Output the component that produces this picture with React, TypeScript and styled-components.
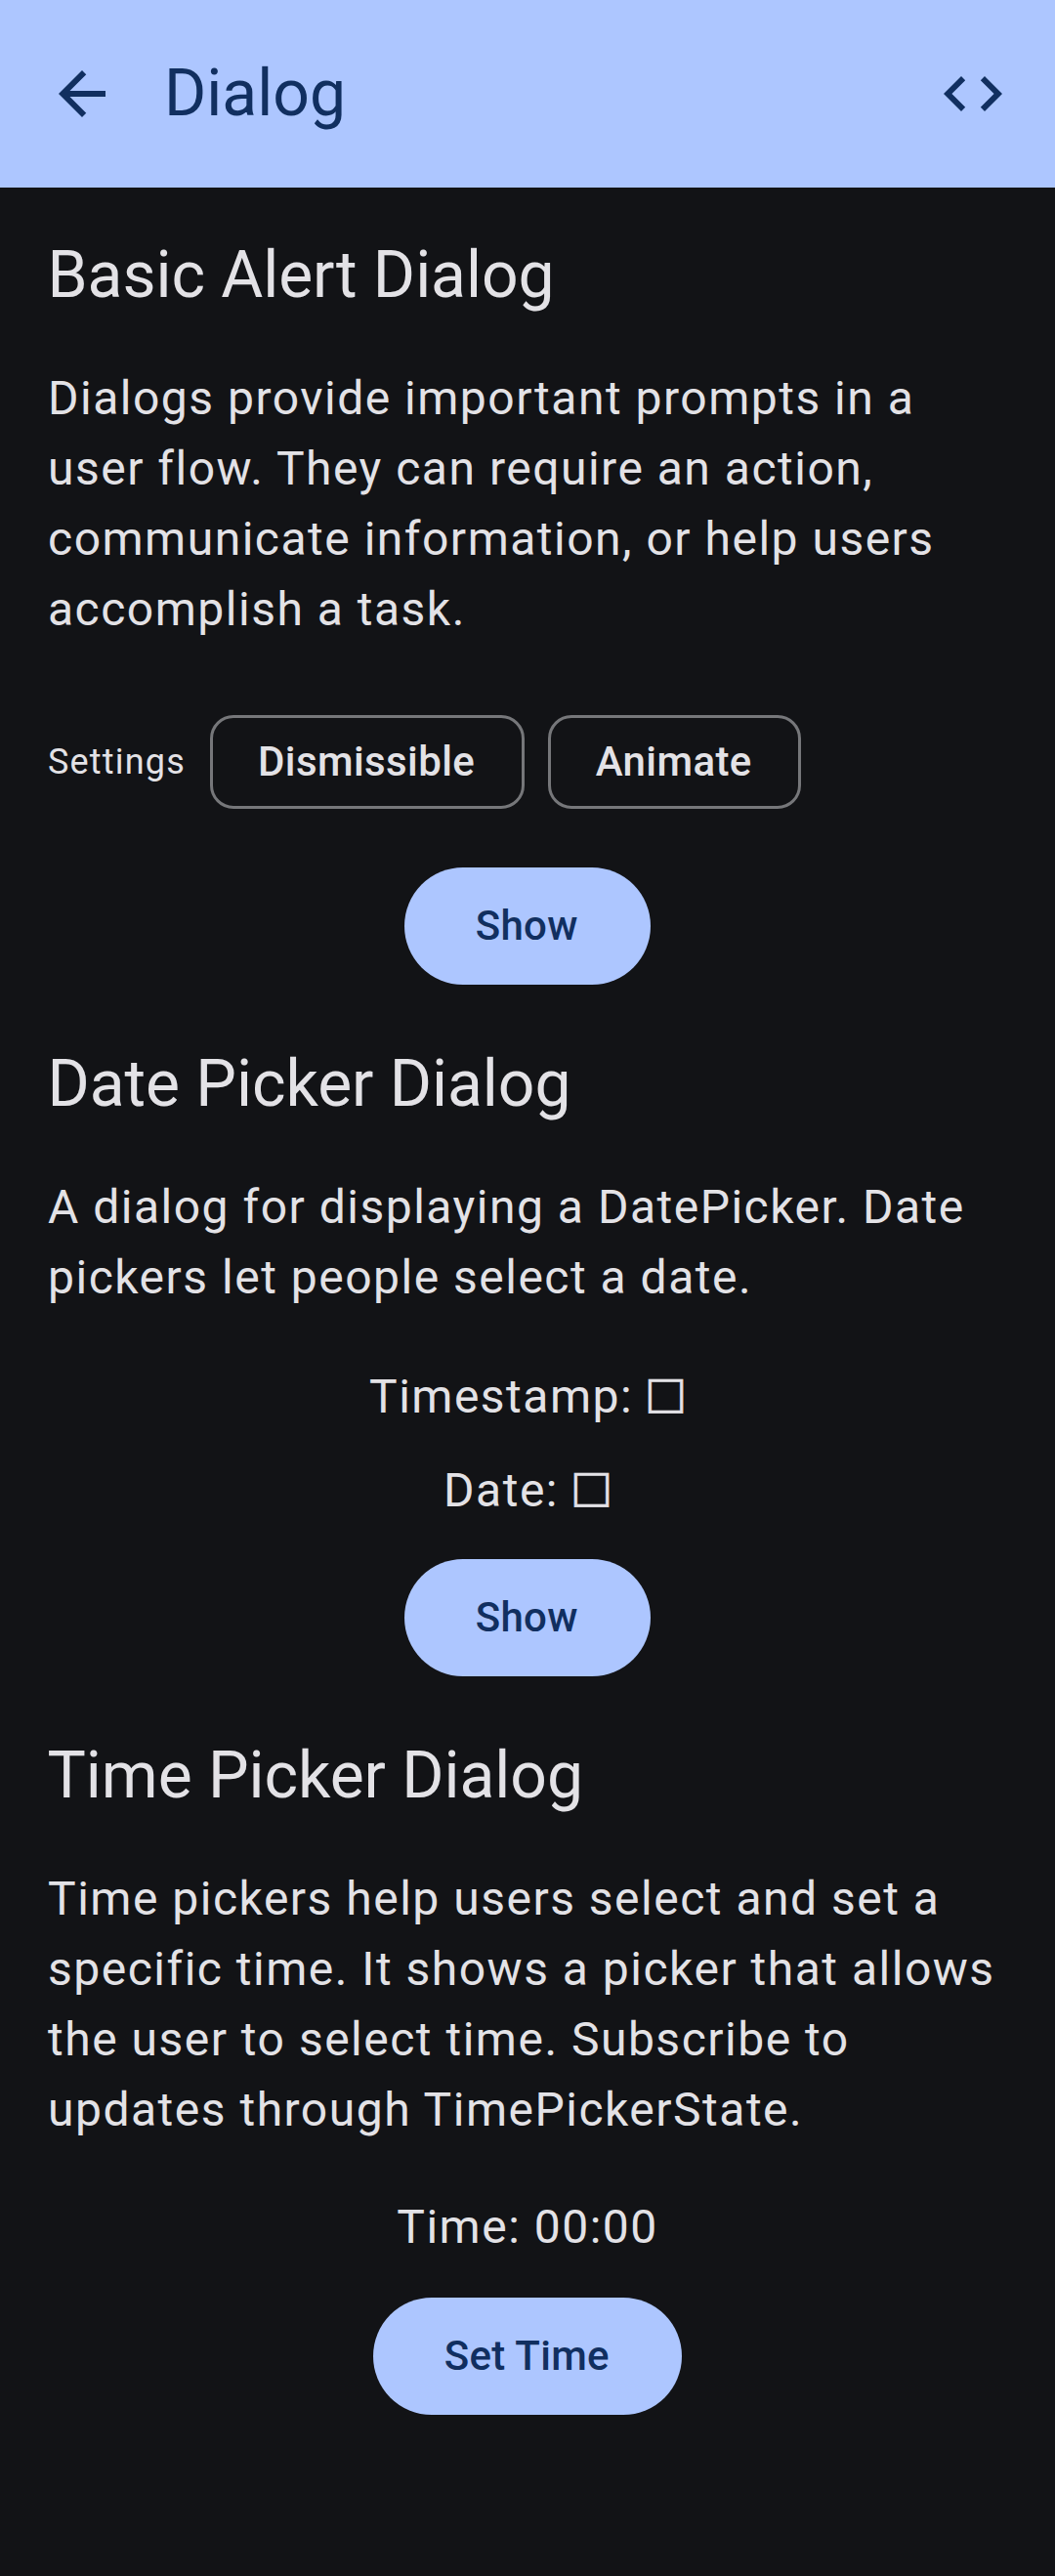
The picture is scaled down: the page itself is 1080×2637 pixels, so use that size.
import React from "react";
import styled, { createGlobalStyle } from "styled-components";

const color = {
  primary: "#adc6ff",
  onPrimary: "#112f60",
  surface: "#121316",
  onSurface: "#e3e2e6",
  outline: "#76777a",
};

const GlobalStyle = createGlobalStyle`
  body {
    margin: 0;
    background: ${color.surface};
  }
  * {
    box-sizing: border-box;
  }
`;

const Screen = styled.div`
  min-height: 2637px;
  background: ${color.surface};
  color: ${color.onSurface};
  font-family: Roboto, "Liberation Sans", sans-serif;
`;

const AppBar = styled.header`
  display: flex;
  align-items: center;
  height: 192px;
  padding: 0 48px;
  background: ${color.primary};
  color: ${color.onPrimary};
`;

const Icon = styled.svg`
  display: block;
  width: 72px;
  height: 72px;
  fill: currentColor;
`;

const IconButton = styled.button`
  padding: 0;
  border: 0;
  background: none;
  color: inherit;
`;

const BarTitle = styled.h1`
  flex: 1;
  margin: 0 0 0 48px;
  font-size: 66px;
  font-weight: 400;
  line-height: 84px;
`;

const Content = styled.main`
  display: flex;
  flex-direction: column;
  gap: 60px;
  padding: 48px;
`;

const Section = styled.section`
  display: flex;
  flex-direction: column;
`;

const SectionTitle = styled.h2`
  margin: 0 0 48px;
  padding-left: 0.5px;
  font-size: 66px;
  font-weight: 400;
  line-height: 84px;
  letter-spacing: -0.06px;
`;

const Description = styled.p`
  margin: 0 0 48px;
  padding-left: 1px;
  font-size: 48px;
  line-height: 72px;
  letter-spacing: 1.5px;
`;

const Settings = styled.div`
  display: flex;
  align-items: center;
  gap: 24px;
  padding: 24px 0;
  margin-bottom: 36px;
`;

const SettingsLabel = styled.span`
  width: 143px;
  padding-left: 1px;
  font-size: 36px;
  line-height: 48px;
  letter-spacing: 1.2px;
`;

const Chip = styled.button`
  height: 96px;
  padding: 0 47.5px 0 46px;
  border: 3px solid ${color.outline};
  border-radius: 24px;
  background: none;
  color: inherit;
  font: 500 42px/60px Roboto, "Liberation Sans", sans-serif;
  letter-spacing: 0.4px;
`;

const Values = styled.div`
  display: flex;
  flex-direction: column;
  align-items: center;
  gap: 24px;
  margin-bottom: 36px;
`;

const Value = styled.div<{ $drop?: number }>`
  height: 72px;
  padding-top: ${(p) => p.$drop ?? 0}px;
  font-size: 48px;
  line-height: 72px;
  letter-spacing: 1.5px;
  white-space: pre;
`;

const Missing = styled.span`
  margin: 0 -2.5px 0 -1.5px;
  font-family: "DejaVu Sans", sans-serif;
  font-size: 45.5px;
  line-height: 0;
  vertical-align: 5px;
  -webkit-text-stroke: 0.6px ${color.onSurface};
`;

const FilledButton = styled.button`
  align-self: center;
  height: 120px;
  padding: 0 74px 0 72.5px;
  border: 0;
  border-radius: 60px;
  background: ${color.primary};
  color: ${color.onPrimary};
  font: 500 42px/60px Roboto, "Liberation Sans", sans-serif;
  letter-spacing: 0.3px;
`;

export default function App() {
  return (
    <Screen>
      <GlobalStyle />
      <AppBar>
        <IconButton aria-label="Back">
          <Icon viewBox="0 0 24 24">
            <path d="M20 11H7.83l5.59-5.59L12 4l-8 8 8 8 1.41-1.41L7.83 13H20v-2z" />
          </Icon>
        </IconButton>
        <BarTitle>Dialog</BarTitle>
        <IconButton aria-label="Source code">
          <Icon viewBox="0 0 24 24">
            <path d="M9.4 16.6 4.8 12l4.6-4.6L8 6l-6 6 6 6 1.4-1.4zm5.2 0 4.6-4.6-4.6-4.6L16 6l6 6-6 6-1.4-1.4z" />
          </Icon>
        </IconButton>
      </AppBar>
      <Content>
        <Section>
          <SectionTitle>Basic Alert Dialog</SectionTitle>
          <Description>
            Dialogs provide important prompts in a user flow. They can require an action, communicate
            information, or help users accomplish a task.
          </Description>
          <Settings>
            <SettingsLabel>Settings</SettingsLabel>
            <Chip>Dismissible</Chip>
            <Chip>Animate</Chip>
          </Settings>
          <FilledButton>Show</FilledButton>
        </Section>
        <Section>
          <SectionTitle>Date Picker Dialog</SectionTitle>
          <Description>
            A dialog for displaying a DatePicker. Date pickers let people select a date.
          </Description>
          <Values>
            <Value $drop={2}>
              Timestamp: <Missing>□</Missing>
            </Value>
            <Value $drop={2}>
              Date: <Missing>□</Missing>
            </Value>
          </Values>
          <FilledButton>Show</FilledButton>
        </Section>
        <Section>
          <SectionTitle>Time Picker Dialog</SectionTitle>
          <Description>
            Time pickers help users select and set a specific time. It shows a picker that allows the
            user to select time. Subscribe to updates through TimePickerState.
          </Description>
          <Values>
            <Value>Time: 00:00</Value>
          </Values>
          <FilledButton>Set Time</FilledButton>
        </Section>
      </Content>
    </Screen>
  );
}
